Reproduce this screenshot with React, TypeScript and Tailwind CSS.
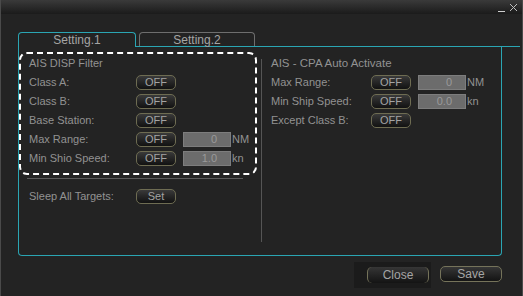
import React from "react"

const font = { fontFamily: '"Liberation Sans", Arial, sans-serif' }

function OffButton({ label = "OFF" }: { label?: string }) {
  return (
    <div className="flex h-[15px] w-[40px] items-center justify-center rounded-[5px] border border-[#6e6c52] bg-gradient-to-b from-[#3a3a3a] to-[#121212] text-[11px] leading-none text-[#a3a3a3]">
      {label}
    </div>
  )
}

function ValueBox({ value }: { value: string }) {
  return (
    <div className="flex h-[15px] w-[48px] items-center justify-end border border-[#7d7d7d] bg-[#6c6c6c] pr-[13px] text-[11px] leading-none text-[#9a9a9a]">
      {value}
    </div>
  )
}

function Row({
  label,
  labelWidth,
  value,
  unit,
}: {
  label: string
  labelWidth: string
  value?: string
  unit?: string
}) {
  return (
    <div className="flex h-[19px] items-center">
      <div className={`${labelWidth} text-[11px] text-[#929292]`}>{label}</div>
      <OffButton />
      {value !== undefined && (
        <div className="ml-[7px] flex items-center">
          <ValueBox value={value} />
          <span className="ml-px text-[11px] text-[#929292]">{unit}</span>
        </div>
      )}
    </div>
  )
}

export default function App() {
  return (
    <div
      className="relative h-[296px] w-[523px] overflow-hidden border-x border-[#4a4a4a] bg-[#232323]"
      style={font}
    >
      {/* title bar */}
      <div className="flex h-[14px] items-center justify-end gap-[4px] bg-gradient-to-b from-[#3a3a3a] to-[#1b1b1b] pr-[4px]">
        <div className="mt-[8px] h-px w-[7px] bg-[#cfcfcf]" />
        <svg width="9" height="9" viewBox="0 0 9 9" className="mt-[1px]">
          <path d="M1 1 L8 8 M8 1 L1 8" stroke="#bdbdbd" strokeWidth="1" />
        </svg>
      </div>

      <div className="pl-[17px] pt-[18px]">
        {/* tabs */}
        <div className="flex h-[15px] items-end">
          <div className="flex h-[15px] w-[118px] items-center justify-center rounded-t-[4px] border border-b-0 border-[#2aa5b3] text-[12px] leading-none text-[#a5a5a5]">
            Setting.1
          </div>
          <div className="flex h-[15px] flex-1 items-end border-b border-[#2aa5b3] pl-[3px]">
            <div className="flex h-[14px] w-[116px] items-center justify-center rounded-t-[4px] border border-b-0 border-[#6e6e6e] text-[12px] leading-none text-[#a5a5a5]">
              Setting.2
            </div>
          </div>
          <div className="w-[2px]" />
        </div>

        {/* panel */}
        <div className="h-[209px] w-[484px] rounded-b-[4px] border border-t-0 border-[#2aa5b3]" />
      </div>

      {/* panel contents */}
      <div className="absolute left-[18px] top-[47px] flex h-[208px] w-[482px]">
        {/* left column */}
        <div className="flex w-[242px] flex-col">
          <div className="mt-[5px] h-[123px] w-[238px] rounded-[8px] border-2 border-dashed border-white pl-[8px]">
            <div className="flex h-[19px] items-center text-[11px] text-[#929292]">AIS DISP Filter</div>
            <Row label="Class A:" labelWidth="w-[107px]" />
            <Row label="Class B:" labelWidth="w-[107px]" />
            <Row label="Base Station:" labelWidth="w-[107px]" />
            <Row label="Max Range:" labelWidth="w-[107px]" value="0" unit="NM" />
            <Row label="Min Shio Speed:" labelWidth="w-[107px]" value="1.0" unit="kn" />
          </div>
          <div className="ml-[8px] mt-[3px] h-px w-[216px] bg-[#5a5a5a]" />
          <div className="mt-[9px] flex h-[16px] items-center pl-[10px]">
            <div className="w-[107px] text-[11px] text-[#929292]">Sleep All Targets:</div>
            <OffButton label="Set" />
          </div>
        </div>

        {/* divider */}
        <div className="mt-[12px] h-[183px] w-px bg-[#555555]" />

        {/* right column */}
        <div className="flex flex-col pl-[9px] pt-[7px]">
          <div className="flex h-[19px] items-center text-[11.5px] text-[#929292]">AIS - CPA Auto Activate</div>
          <Row label="Max Range:" labelWidth="w-[100px]" value="0" unit="NM" />
          <Row label="Min Ship Speed:" labelWidth="w-[100px]" value="0.0" unit="kn" />
          <Row label="Except Class B:" labelWidth="w-[100px]" />
        </div>
      </div>

      {/* bottom buttons */}
      <div className="absolute left-[353px] top-[262px] flex items-start">
        <div className="flex h-[26px] w-[77px] items-center justify-end bg-[#1b1b1b] pr-[2px]">
          <div className="flex h-[16px] w-[62px] items-center justify-center rounded-[5px] border-x border-[#75735a] bg-gradient-to-b from-[#363636] to-[#141414] text-[12px] text-[#a5a5a5]">
            Close
          </div>
        </div>
        <div className="ml-[9px] mt-[4px] flex h-[16px] w-[62px] items-center justify-center rounded-[5px] border border-[#75735a] bg-gradient-to-b from-[#363636] to-[#141414] text-[12px] text-[#a5a5a5]">
          Save
        </div>
      </div>
    </div>
  )
}
